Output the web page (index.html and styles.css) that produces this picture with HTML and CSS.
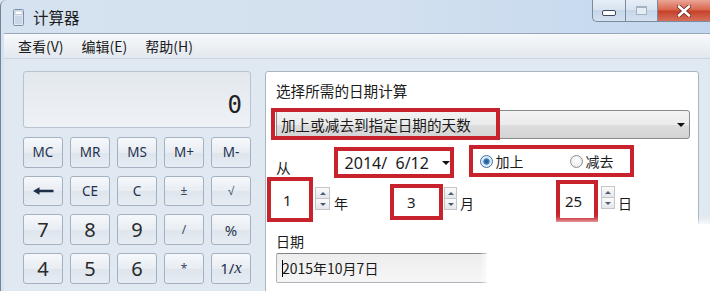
FILE: index.html
```html
<!DOCTYPE html>
<html lang="zh-CN">
<head>
  <meta charset="UTF-8">
  <title>计算器</title>
  <link rel="stylesheet" href="styles.css">
</head>
<body>
  <div class="window">
    <div class="titlebar">
      <svg class="app-icon" width="11" height="17" viewBox="0 0 11 17">
        <rect x="0.5" y="0.5" width="10" height="16" rx="1" fill="#dfe8f2" stroke="#7d92aa"/>
        <rect x="2" y="2" width="7" height="3.5" fill="#ffffff" stroke="#9fb0c4" stroke-width="0.6"/>
        <rect x="2" y="7" width="7" height="8" fill="#c9d7e7"/>
      </svg>
      <span class="title">计算器</span>
      <div class="caption">
        <div class="cap cap-min"><span class="min-bar"></span></div>
        <div class="cap cap-max"><span class="max-box"></span></div>
        <div class="cap cap-close">
          <svg width="14" height="12" viewBox="0 0 14 12">
            <path d="M2 1.5 L12 10.5 M12 1.5 L2 10.5" stroke="#6b2a20" stroke-width="4.2" stroke-linecap="round"/>
            <path d="M2 1.5 L12 10.5 M12 1.5 L2 10.5" stroke="#ffffff" stroke-width="2.6" stroke-linecap="round"/>
          </svg>
        </div>
      </div>
    </div>

    <div class="frame">
      <div class="menubar">
        <span>查看(V)</span>
        <span>编辑(E)</span>
        <span>帮助(H)</span>
      </div>

      <div class="client">
        <!-- calculator keys -->
        <div class="calc">
          <div class="display">0</div>
          <div class="keys">
            <button class="key">MC</button>
            <button class="key">MR</button>
            <button class="key">MS</button>
            <button class="key">M+</button>
            <button class="key">M-</button>
            <button class="key">
              <svg width="21" height="8" viewBox="0 0 21 8">
                <path d="M5 4 H20.5" stroke="#1d2f47" stroke-width="2.4"/>
                <path d="M0 4 L6.5 0.3 L6.5 7.7 Z" fill="#1d2f47"/>
              </svg>
            </button>
            <button class="key">CE</button>
            <button class="key">C</button>
            <button class="key op">±</button>
            <button class="key op">√</button>
            <button class="key digit">7</button>
            <button class="key digit">8</button>
            <button class="key digit">9</button>
            <button class="key op">/</button>
            <button class="key pct">%</button>
            <button class="key digit">4</button>
            <button class="key digit">5</button>
            <button class="key digit">6</button>
            <button class="key op">*</button>
            <button class="key inv">1/<i>x</i></button>
          </div>
        </div>

        <!-- date calculation -->
        <div class="panel">
          <div class="label">选择所需的日期计算</div>
          <div class="combo">
            <span>加上或减去到指定日期的天数</span>
            <span class="combo-arrow"></span>
            <span class="mark mark-combo"></span>
          </div>

          <div class="row-from">
            <span class="from">从</span>
            <div class="date-pick">
              <span class="date-text">2014/  6/12</span>
              <span class="combo-arrow"></span>
            </div>
            <div class="radios">
              <span class="radio"><span class="dot on"></span>加上</span>
              <span class="radio radio-2"><span class="dot"></span>减去</span>
            </div>
          </div>

          <div class="row-num">
            <div class="num num-year">1</div>
            <div class="spin"><span class="up"></span><span class="down"></span></div>
            <span class="unit">年</span>
            <div class="num num-month">3</div>
            <div class="spin spin-month"><span class="up"></span><span class="down"></span></div>
            <span class="unit unit-month">月</span>
            <div class="num num-day">25</div>
            <div class="spin spin-day"><span class="up"></span><span class="down"></span></div>
            <span class="unit unit-month">日</span>
          </div>

          <div class="label label-date">日期</div>
          <div class="result"><span class="caret"></span>2015年10月7日</div>
        </div>
      </div>
    </div>

    <div class="smudge"></div>
  </div>
</body>
</html>
```

FILE: styles.css
```css
* {
  box-sizing: border-box;
}
html, body {
  margin: 0;
}
body {
  width: 710px;
  height: 291px;
  overflow: hidden;
  font-family: "Noto Sans", "Noto Sans CJK SC", sans-serif;
  color: #1b1b1b;
  background: #e0e8f1;
}
.window {
  position: relative;
  width: 710px;
  height: 291px;
  overflow: hidden;
  border-left: 1px solid #72849a;
  border-top-left-radius: 6px;
  background: linear-gradient(to right, #d6e2ef, #d2e0ef 55%, #c2d7ee);
}

/* title bar */
.titlebar {
  height: 33px;
  display: flex;
  align-items: center;
  padding-left: 12px;
}
.app-icon {
  margin-top: 1px;
}
.title {
  margin-left: 9px;
  font-family: "Noto Sans CJK SC", sans-serif;
  font-size: 15.5px;
  line-height: 20px;
  color: #1e1e1e;
}
.caption {
  margin-left: auto;
  align-self: flex-start;
  display: flex;
  height: 22px;
}
.cap {
  height: 22px;
  display: flex;
  align-items: center;
  justify-content: center;
  border: 1px solid #7a8ba0;
  border-top: none;
}
.cap-min {
  width: 33px;
  border-bottom-left-radius: 5px;
  border-right: none;
  background: linear-gradient(#e6eef7, #d6e2ef 50%, #c6d6e8 50%, #d3e1f0);
}
.cap-max {
  width: 32px;
  border-right: none;
  background: linear-gradient(#e6eef7, #d6e2ef 50%, #c6d6e8 50%, #d3e1f0);
}
.cap-close {
  width: 53px;
  border-right: none;
  background: linear-gradient(#eaa597, #d8644b 48%, #c5402a 52%, #d7705a);
}
.min-bar {
  width: 14px;
  height: 6px;
  margin-top: 4px;
  border: 1px solid #3c4c60;
  border-radius: 2px;
  background: #ffffff;
}
.max-box {
  width: 11px;
  height: 9px;
  border: 1px solid #a4b3c4;
  border-top-width: 2px;
  background: #e4ecf4;
}

/* menu */
.frame {
  padding-left: 3px;
}
.menubar {
  height: 26px;
  display: flex;
  align-items: center;
  gap: 18px;
  padding-left: 14px;
  border-top: 1px solid #97a8bc;
  border-bottom: 1px solid #cbd5e0;
  background: linear-gradient(#f7f9fb, #e2e8ef);
  font-family: "Noto Sans CJK SC", sans-serif;
  font-size: 14px;
  line-height: 20px;
  color: #1b1b1b;
}

/* client area */
.client {
  display: flex;
  gap: 14px;
  height: 240px;
  padding: 12px 0 0 19px;
  background: #e0e8f1;
}
.calc {
  width: 228px;
}
.display {
  height: 57px;
  display: flex;
  align-items: flex-end;
  justify-content: flex-end;
  padding: 0 8px 8px 0;
  border: 1px solid #b9c4d1;
  border-radius: 3px;
  background: linear-gradient(#e3e8ee, #eef2f6);
  font-family: "DejaVu Sans Mono", monospace;
  font-size: 24px;
  line-height: 28px;
  color: #222222;
}
.keys {
  display: grid;
  grid-template-columns: repeat(5, 40px);
  grid-template-rows: repeat(4, 30.5px);
  column-gap: 7px;
  row-gap: 8.2px;
  margin-top: 9px;
}
.key {
  display: flex;
  align-items: center;
  justify-content: center;
  padding: 0;
  border: 1px solid #a4b1c0;
  border-radius: 3px;
  background: linear-gradient(#f6f8fb, #e8edf3 50%, #dee5ed 51%, #e6ecf2);
  font-family: "Noto Sans", sans-serif;
  font-size: 13.5px;
  color: #1f324d;
}
.key.digit {
  font-size: 20px;
  color: #2b2b2b;
}
.key.op {
  font-size: 12px;
  color: #3a4a60;
}
.key.pct {
  font-size: 15px;
  color: #2b3a4f;
}
.key.inv {
  font-size: 15px;
  color: #1f324d;
}
.key.inv i {
  font-family: "Liberation Serif", serif;
  font-size: 17px;
}

/* date panel */
.panel {
  width: 434px;
  height: 260px;
  padding: 9px 0 0 10px;
  border: 1px solid #a9b5c3;
  border-radius: 3px;
  background: #ffffff;
  font-family: "Noto Sans CJK SC", sans-serif;
  font-size: 14.6px;
}
.label {
  line-height: 20px;
  color: #1b1b1b;
}
.combo {
  position: relative;
  width: 414px;
  height: 29px;
  margin-top: 9px;
  display: flex;
  align-items: center;
  justify-content: space-between;
  padding: 0 4px 0 4px;
  border: 1px solid #8a8a8a;
  border-radius: 3px;
  background: linear-gradient(#f3f3f3, #ebebeb 50%, #dedede 50%, #d3d3d3);
  line-height: 20px;
}
.combo-arrow {
  width: 0;
  height: 0;
  border-left: 4px solid transparent;
  border-right: 4px solid transparent;
  border-top: 4px solid #111111;
}
.mark {
  position: absolute;
  border: 4px solid #c8222c;
}
.mark-combo {
  left: -6px;
  top: -3px;
  width: 229px;
  height: 32px;
}

.row-from {
  display: flex;
  align-items: flex-start;
  height: 32px;
  margin-top: 6px;
}
.from {
  margin-top: 13px;
  line-height: 20px;
}
.date-pick {
  width: 120px;
  height: 31px;
  margin: 2px 0 0 43px;
  display: flex;
  align-items: center;
  justify-content: space-between;
  padding: 0 0 0 7px;
  border: 4px solid #c8222c;
  background: #ffffff;
}
.date-text {
  font-family: "Noto Sans", sans-serif;
  font-size: 16px;
  white-space: pre;
  color: #1b1b1b;
}
.radios {
  width: 165px;
  height: 32px;
  margin-left: 15px;
  display: flex;
  align-items: center;
  padding-left: 7px;
  border: 4px solid #c8222c;
  background: #ffffff;
  font-size: 14px;
}
.radio {
  display: flex;
  align-items: center;
  gap: 3px;
  line-height: 20px;
}
.radio-2 {
  margin-left: 46px;
}
.dot {
  width: 13px;
  height: 13px;
  border-radius: 50%;
  border: 1px solid #8e8f8f;
  background: radial-gradient(circle at 50% 40%, #ffffff, #e2e2e2);
}
.dot.on {
  border-color: #3c72a4;
  background: radial-gradient(circle, #1b4f86 0, #3f83c2 2.8px, #d7e6f4 3.6px, #f4f8fc);
}

.row-num {
  display: flex;
  align-items: flex-start;
  height: 45px;
}
.num {
  display: flex;
  align-items: center;
  border: 4px solid #c8222c;
  background: #ffffff;
  font-family: "Noto Sans", sans-serif;
  font-size: 15px;
  color: #1b1b1b;
}
.num-year {
  width: 46px;
  height: 45px;
  margin-left: -9px;
  padding-left: 12px;
}
.num-month {
  width: 53px;
  height: 36px;
  margin: 7px 0 0 42px;
  padding-left: 13px;
}
.num-day {
  width: 42px;
  height: 42px;
  margin: 3px 0 0 82px;
  padding-left: 5px;
}
.spin {
  width: 15px;
  height: 23px;
  margin: 10px 0 0 2px;
  display: flex;
  flex-direction: column;
}
.spin-month {
  width: 13px;
  margin-left: 1px;
}
.spin-day {
  width: 14px;
  margin: 9px 0 0 3px;
}
.spin span {
  flex: 1;
  display: flex;
  align-items: center;
  justify-content: center;
  border: 1px solid #c2c6cc;
  background: linear-gradient(#fbfbfb, #e4e6e9);
}
.spin span + span {
  border-top: none;
}
.spin span::before {
  content: "";
  border-left: 3px solid transparent;
  border-right: 3px solid transparent;
}
.spin .up::before {
  border-bottom: 3px solid #4b5c74;
}
.spin .down::before {
  border-top: 3px solid #4b5c74;
}
.unit {
  margin: 16px 0 0 4px;
  font-size: 14px;
  line-height: 20px;
}
.unit-month {
  margin-left: 3px;
}

.label-date {
  margin-top: 10px;
  font-size: 14px;
  line-height: 18px;
}
.result {
  width: 414px;
  height: 30px;
  margin-top: 3px;
  display: flex;
  align-items: center;
  padding-left: 5px;
  border: 1px solid #adb2bb;
  border-top-color: #80858c;
  border-radius: 2px;
  background: linear-gradient(#ededed, #f6f6f6);
  font-size: 14px;
  color: #1b1b1b;
}
.caret {
  width: 1px;
  height: 17px;
  margin-right: -1px;
  background: #000000;
}

/* white patch over the lower right corner */
.smudge {
  position: absolute;
  left: 486px;
  top: 224px;
  right: 0;
  bottom: 0;
  border-top-left-radius: 40px 26px;
  background: #ffffff;
  box-shadow: 0 0 6px 3px rgba(255, 255, 255, 0.85);
}
```
